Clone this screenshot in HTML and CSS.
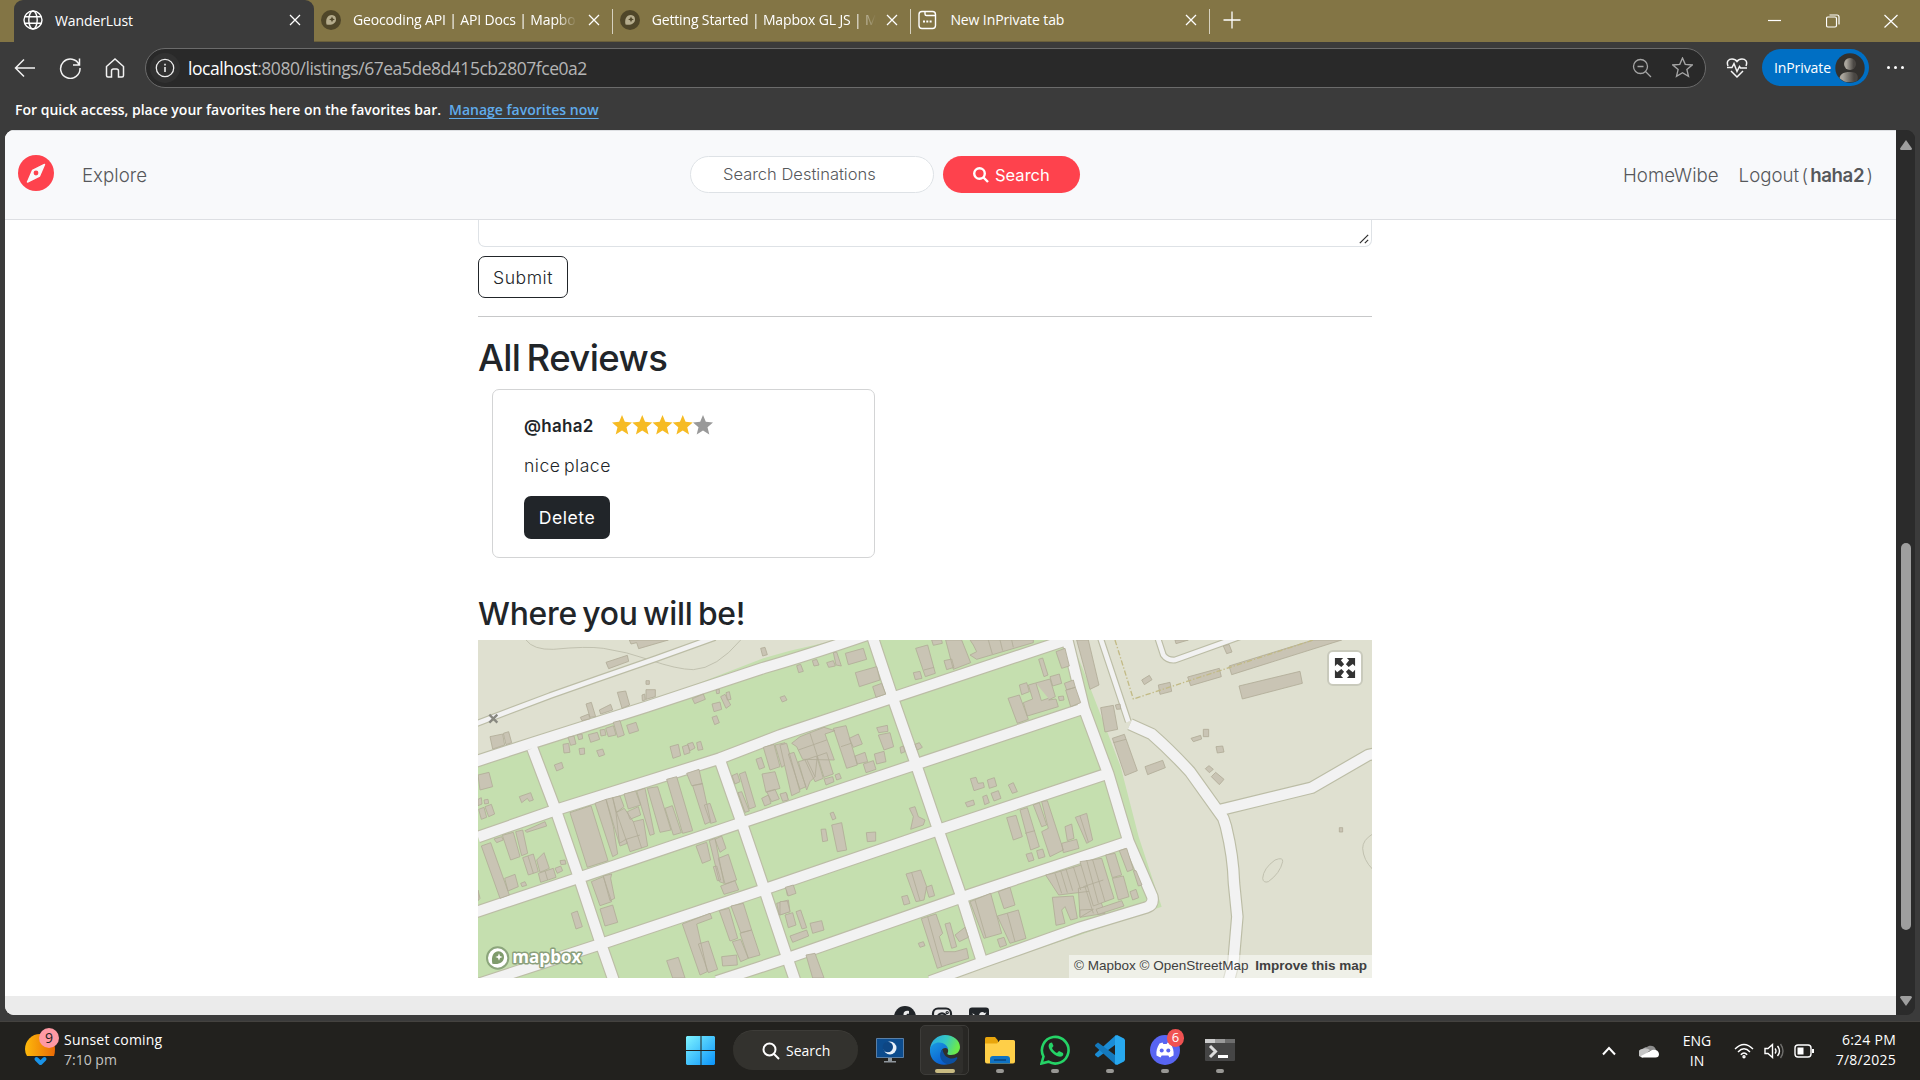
FILE: index.html
```html
<!DOCTYPE html>
<html lang="en">
<head>
<meta charset="utf-8">
<title>WanderLust</title>
<link rel="stylesheet" href="styles.css">
</head>
<body>
<div class="tabs">
  <div class="tab active">
    <svg class="fav" viewBox="0 0 20 20" fill="none" stroke="#fff" stroke-width="1.4"><circle cx="10" cy="10" r="9"/><ellipse cx="10" cy="10" rx="4.2" ry="9"/><path d="M1.8 6.8h16.4M1.8 13.2h16.4"/></svg>
    <span class="title">WanderLust</span>
    <svg class="x" viewBox="0 0 12 12"><path d="M1 1l10 10M11 1L1 11"/></svg>
  </div>
  <div class="tab">
    <svg class="fav" viewBox="0 0 20 20"><circle cx="10" cy="10" r="10" fill="#4f4629"/><path d="M5.5 14.5c-1-5 .5-9.500 5.500-9.500a4.400 4.400 0 0 1 4 4.500c0 4-4 6-9.500 5z" fill="#b5ac8d"/><path d="M11 6.500l.9 2 2 .9-2 .9-.9 2-.9-2-2-.9 2-.9z" fill="#4f4629"/></svg>
    <span class="title fade">Geocoding API | API Docs | Mapbo</span>
    <svg class="x" viewBox="0 0 12 12"><path d="M1 1l10 10M11 1L1 11"/></svg>
  </div>
  <div class="tab">
    <svg class="fav" viewBox="0 0 20 20"><circle cx="10" cy="10" r="10" fill="#4f4629"/><path d="M5.5 14.5c-1-5 .5-9.500 5.500-9.500a4.400 4.400 0 0 1 4 4.500c0 4-4 6-9.500 5z" fill="#b5ac8d"/><path d="M11 6.500l.9 2 2 .9-2 .9-.9 2-.9-2-2-.9 2-.9z" fill="#4f4629"/></svg>
    <span class="title fade">Getting Started | Mapbox GL JS | M</span>
    <svg class="x" viewBox="0 0 12 12"><path d="M1 1l10 10M11 1L1 11"/></svg>
  </div>
  <div class="tab">
    <svg class="fav" viewBox="0 0 20 20" fill="none" stroke="#fff" stroke-width="1.400"><rect x="1" y="1.500" width="16.500" height="17" rx="3"/><path d="M7 1.500v2.500a1.500 1.500 0 0 0 1.500 1.500h9"/><path d="M5 11.500h2M8.300 11.500h2M11.600 11.500h2" stroke-width="2"/></svg>
    <span class="title">New InPrivate tab</span>
    <svg class="x" viewBox="0 0 12 12"><path d="M1 1l10 10M11 1L1 11"/></svg>
  </div>
  <svg class="plus" viewBox="0 0 18 18"><path d="M9 .5v17M.5 9h17"/></svg>
  <div class="winbtns">
    <svg viewBox="0 0 14 14"><path d="M0 6.500h13"/></svg>
    <svg viewBox="0 0 14 14"><rect x=".5" y="3" width="10" height="10" rx="1.500"/><path d="M3.500 1h7.500a2 2 0 0 1 2 2v7.500"/></svg>
    <svg viewBox="0 0 14 14"><path d="M.5 1l13 12.500M13.500 1L.5 13.500"/></svg>
  </div>
</div>
<div class="toolbar">
  <svg class="tool" viewBox="0 0 22 22"><path d="M21 11H1.500M10 2.500L1.500 11l8.500 8.500"/></svg>
  <svg class="tool" viewBox="0 0 22 22"><path d="M20.300 8A9.700 9.700 0 1 0 21 11M20.500 1.500V8h-6.500"/></svg>
  <svg class="tool" viewBox="0 0 22 22"><path d="M2.500 9.500L11 2l8.500 7.500v9a1.500 1.500 0 0 1-1.500 1.500h-3.500v-6a2 2 0 0 0-2-2h-3a2 2 0 0 0-2 2v6H4a1.500 1.500 0 0 1-1.500-1.500z"/></svg>
  <div class="url">
    <span class="infobg"><svg viewBox="0 0 20 20" fill="none" stroke="#eee" stroke-width="1.300"><circle cx="10" cy="10" r="8.700"/><path d="M10 9v5M10 5.800v1.700" stroke-width="1.600"/></svg></span>
    <span class="addr"><b>localhost</b>:8080/listings/67ea5de8d415cb2807fce0a2</span>
    <svg class="uico" viewBox="0 0 20 20"><circle cx="8.500" cy="8.500" r="7"/><path d="M13.500 13.500l5.500 5.500M5.500 8.500h6"/></svg>
    <svg class="uico star" viewBox="0 0 20 20"><path d="M10 1l2.600 6 6.600.6-5 4.400 1.500 6.500L10 15l-5.700 3.500L5.800 12l-5-4.400L7.400 7z"/></svg>
  </div>
  <svg class="heart" viewBox="0 0 22 22"><path d="M2 9C0 4 3 2 6 2c2.500 0 4 1 5 2.500C12 3 13.500 2 16 2c3 0 6 2 4 7M1 10.500h5l2-4 3 8 2.500-5 1 1.500H21M5 14l6 6 6-6"/></svg>
  <div class="priv"><span>InPrivate</span>
    <svg viewBox="0 0 30 30"><defs><linearGradient id="av"><stop offset=".2" stop-color="#aaa59c"/><stop offset=".8" stop-color="#4a4743"/></linearGradient><clipPath id="ac"><circle cx="15" cy="15" r="14.500"/></clipPath></defs><circle cx="15" cy="15" r="14.700" fill="#33312e"/><g fill="url(#av)" clip-path="url(#ac)"><circle cx="15" cy="11" r="6"/><path d="M4 29c0-8 4-10 11-10s9 3 7 10z"/></g></svg></div>
  <span class="dots"><i></i><i></i><i></i></span>
</div>
<div class="favbar"><span>For quick access, place your favorites here on the favorites bar.</span><a>Manage favorites now</a></div>
<div class="view">
  <div class="page">
    <nav>
      <svg class="compass" viewBox="0 0 36 36"><circle cx="18" cy="18" r="18" fill="#fe424d"/><path d="M26.500 9.500L21.500 21l-12 6 5-11.500z" fill="#f8f9fa" stroke="#f8f9fa" stroke-width="1.500" stroke-linejoin="round"/><circle cx="18" cy="18" r="2.400" fill="#fe424d"/></svg>
      <a class="explore">Explore</a>
      <div class="field">Search Destinations</div>
      <div class="sbtn"><svg viewBox="0 0 16 16"><circle cx="6.500" cy="6.500" r="5.300"/><path d="M10.500 10.500l4.500 4.500"/></svg><span>Search</span></div>
      <a class="home">HomeWibe</a>
      <a class="logout">Logout ( <b>haha2</b> )</a>
    </nav>
    <main>
      <div class="area"><svg viewBox="0 0 12 12"><path d="M1 11L11 1M7 11l4-4"/></svg></div>
      <button class="submit">Submit</button>
      <hr>
      <h2>All Reviews</h2>
      <div class="card">
        <div class="who"><b>@haha2</b>
          <svg class="stars" viewBox="0 0 101 20"><defs><path id="s" d="M10 0l2.800 6.800 7.200.6-5.500 4.800 1.800 7.300L10 15.500l-6.300 4 1.800-7.300L0 7.400l7.200-.6z"/></defs><g fill="#f6bb23"><use href="#s"/><use href="#s" x="20.250"/><use href="#s" x="40.500"/><use href="#s" x="60.750"/></g><use href="#s" x="81" fill="#999"/></svg>
        </div>
        <p>nice place</p>
        <button class="delete">Delete</button>
      </div>
      <h3>Where you will be!</h3>
      <div class="map">
        <svg viewBox="24 30 2682 1014">
          <path class="green" d="M0 405L190 335 530 220 880 85 960 62 1100 30H1802L1840 120 1952 410 2006 620 2075 830 1830 915 1440 1044H0z"/>
          <g class="contour"><path d="M168 30Q190 60 250 58 350 48 400 55 470 65 540 90 620 118 670 119 740 115 812 30"/><path d="M2378 745Q2380 715 2415 690 2440 680 2438 695 2430 730 2395 755 2380 760 2378 745zM2708 612Q2678 630 2678 655 2680 690 2708 718"/></g>
          <g class="case"><path id="r" d="M0 400L190 338 530 230 880 114Q1000 80 1190 15M24 621L257 540 748 386 930 316 1268 203 1795 28M0 852L327 743 815 578 930 539 1338 403 1842 235M0 1070L393 942 883 778 1405 600 1915 430M740 1054L960 982 1475 802 1980 633M1380 1054L1535 998 1830 893 2030 832Q2052 825 2047 800L1975 633 1915 432 1842 235 1787 10M187 355L257 540 327 743 393 942 432 1054M748 386L815 578 883 778 950 978 976 1054M1204 10L1268 203 1338 403 1405 600 1475 802 1537 998M1980 283L2045 312Q2100 360 2160 425L2260 565 2268 590Q2290 680 2292 760L2302 860 2290 1000 2276 1054M2250 540L2525 473 2695 375 2720 370"/><path class="thin" d="M0 288L240 197 385 146 560 85 735 22M1890 20L1975 275M2062 20L2080 75Q2092 92 2115 90L2310 20"/></g>
          <g class="road"><use href="#r"/><path class="thin" d="M0 288L240 197 385 146 560 85 735 22M1890 20L1975 275M2062 20L2080 75Q2092 92 2115 90L2310 20"/></g>
          <path class="b" d="M478 30L483 42 500 38 506 56 595 30zM408 97L472 76 476 94 416 116zM442 187L467 183 479 225 456 235zM348 222L364 217 377 260 360 262zM331 262L356 252 360 266 336 272zM388 240L422 223 428 240 392 252zM528 179H556V200L528 208zM516 195L524 192 526 210 517 212zM528 152H538V163H528zM872 55L885 52 892 74 878 78zM60 320L98 312 104 345 68 357zM100 310L116 305 125 338 108 344zM24 435L57 427 68 470 30 480zM667 206L700 192 706 208 674 221zM726 222L750 216 755 238 732 245zM752 200L765 193 782 225 768 235zM768 188L778 185 783 208 772 210zM738 180L748 178V190L740 191zM726 262L740 257 748 278 734 284zM930 202L944 197 951 210 937 216zM355 314L382 307 389 328 362 337zM390 300L404 298 408 315 393 318zM407 295L430 287 438 315 415 320zM430 277L450 272 463 315 443 322zM470 286L498 277 506 302 478 311zM279 343L296 340 300 367 282 369zM294 322L312 318 318 342 302 346zM322 314L336 312 338 326 326 329zM327 356L343 354 344 372 330 374zM380 362L398 357 404 374 387 380zM253 405L275 397 280 414 260 423zM600 350L625 343 632 377 609 385zM637 350L654 344 660 368 643 374zM652 342L668 337 675 354 660 362zM680 338L692 334 699 358 684 361zM148 500L182 488 190 510 178 514 172 505 155 518zM24 508L34 503 36 522 24 527zM42 510L54 508 56 520 44 522zM26 538L42 532 50 562 34 568zM45 530L64 523 74 552 56 560z"/>
          <path class="b" d="M300 548L363 527 414 692 352 712zM375 520L408 508 430 590 443 672 428 680zM408 508L428 503 440 548 472 640 450 648zM428 503L450 498 462 530 438 548zM462 492L497 483 512 525 475 537zM500 483L525 475 553 612 540 616zM438 548L463 535 490 575 520 568 533 648 480 665 468 628 448 640zM472 545L505 530 512 555 480 568zM468 628L510 615M490 575L515 655M532 475L563 470 603 600 570 607zM585 535L607 527 634 608 610 615zM590 448L620 440 668 602 638 610zM650 430L687 418 697 462 665 467zM668 467L697 460 722 575 705 583zM703 525L720 520 739 575 722 580zM880 352L912 343 930 410 900 420zM915 345L945 338 960 395 935 412zM858 388L874 382 884 412 868 418zM786 437L802 430 810 455 795 462zM808 432L826 425 857 530 838 537zM804 488L815 485 838 543 825 547zM876 432L915 425 930 475 888 487zM875 505L895 495 903 520 884 528zM890 485L915 478 928 507 905 515zM940 492L950 490 954 508 943 512z"/>
          <path class="b" d="M24 780L30 805 24 812zM34 648L62 638 118 795 90 805zM72 627L95 620 100 630 80 638zM97 616L130 607 150 680 122 690zM137 605L158 600 173 670 155 677zM165 602L225 575 230 588 170 607zM158 683L190 672 205 725 175 735zM174 678L190 730M200 690L222 668 238 715 210 727zM205 730L250 715 258 742 212 757zM225 722L233 750M270 692L285 690 288 702 273 704zM255 715L272 708 278 722 262 730zM104 745L135 733 145 770 114 783zM152 760L165 755 170 766 156 770zM364 755L400 740 425 815 390 827zM400 738L425 732 422 745 434 805 420 812zM390 837L428 825 443 877 405 888zM304 850L322 843 337 890 318 897zM678 648L710 637 722 690 697 700zM718 632L735 625 762 760 748 755zM735 628L755 618 768 655 750 667zM745 685L775 673 800 750 765 762zM752 768L795 752 806 780 762 793zM730 710L740 708 752 750 742 752zM637 882L720 850 726 865 680 882 712 1025 690 1035zM685 942L715 933 743 1018 715 1028zM748 842L777 835 803 925 780 933zM783 828L820 820 845 900 812 908zM810 910L845 900 870 975 835 985zM787 935L812 928 835 985 812 995zM755 980L800 975 802 1005 758 1008zM590 992L625 982 645 1044H608zM948 775L962 772 968 792 952 796zM920 820L955 810 960 845 928 855z"/>
          <g transform="translate(930)"><path class="b" d="M196 70L250 55 260 88 205 104zM226 128L290 110 300 150 238 170zM278 170L305 160 317 192 288 202zM160 68L170 66 184 108 168 105zM140 98L160 92 166 108 146 112zM97 92L110 88 117 105 102 108zM50 107L62 103 70 124 56 128zM407 55L443 45 466 130 436 140zM432 120L462 112M400 128L420 124 426 145 406 149zM455 30H485L487 40 460 46zM497 30H545L572 98 520 118zM492 92L515 87 522 112 500 119zM570 75L590 65 580 45 570 30H760V38L590 88zM625 30L637 72M660 30L668 62M695 30L700 52M776 88L788 84 804 135 792 140zM828 65L855 55 868 108 845 115zM810 140L838 132 845 160 818 168zM853 160L880 150 886 172 860 180zM857 180L886 172 902 218 872 230zM835 200L850 198 852 210 838 212zM718 165L740 158 748 185 725 194zM730 218L758 207 745 165 810 147 826 200 806 210 828 207 835 230 742 258zM768 160L784 212 805 205M684 205L718 195 745 268 712 280zM890 30H925L957 165 930 178z"/>
          <path class="b" d="M160 295L198 287 232 405 200 415zM183 350L213 340M208 325L235 312 247 342 220 352zM225 378L255 367 263 395 232 402zM250 402L280 392 288 418 258 428zM283 372L312 364 318 395 290 402zM295 315L330 308 341 350 312 360zM290 293L322 286 324 304 296 308zM360 352L370 348 375 365 363 370zM405 343L418 338 427 352 412 360zM35 340L60 320 132 292 165 302 135 312 163 390 68 388 50 350zM90 310L112 378 105 440M55 360L140 330M0 345L20 340 60 485 35 497zM25 372L42 367 78 470 60 478zM55 395L80 388 105 440 90 455 80 480zM75 390L110 378 130 445 105 455zM112 378L140 368 160 432 132 442zM132 447L158 440 162 455 138 465zM165 435L178 430 184 445 170 450zM0 492L18 487 25 510 8 514zM150 550L160 546 168 565 158 570zM123 598L137 597 143 632 128 635zM155 585L185 578 200 660 172 665zM259 608L287 606V633L262 635zM388 535L405 530 415 560 435 570 430 585 392 598 400 560zM556 518L580 510 584 524 562 531zM571 446L588 442 594 460 610 458 613 472 582 482zM622 450L643 443 650 468 628 475zM608 500L620 495 628 518 614 524zM633 490L655 482 663 505 642 513zM685 465L700 458 712 485 697 490z"/>
          <path class="b" d="M378 732L422 720 440 770 432 810 408 815zM395 728L420 812M438 772L455 765 464 797 447 802zM365 800L382 796 390 820 372 825zM16 772L40 765 48 790 25 798zM0 815L22 813 30 845 0 855zM15 855L38 848 48 885 25 893zM48 845L62 840 80 893 66 897zM90 880L125 872 132 900 98 910zM30 918L80 900 86 918 38 937zM78 975L105 970 132 1044H98zM424 866L468 852 488 910 478 920 492 965 525 965 560 955 566 985 500 1005 472 1015zM443 860L485 1010M495 882L510 878 530 950 515 955zM525 915L555 892 565 922 538 935zM415 940L430 935 435 947 420 952zM570 815L632 790 665 910 612 925zM585 810L618 923M655 785L690 772 705 825 672 836zM652 858L715 840 738 925 690 940zM682 850L705 935M652 928L672 922 680 945 660 952zM680 563L708 556 727 620 700 630zM720 540L742 533 778 650 752 660zM735 610L765 602M760 525L778 518 800 585 785 590zM785 515L802 512 850 660 810 680 785 605 805 595zM855 590L875 582 882 625 862 632zM845 640L890 628 897 655 850 668zM886 562L920 550 938 630 920 640zM900 558L925 636M738 673L755 668 762 690 746 695zM770 662L788 657 795 680 776 686zM797 735L820 730 960 688V780L836 795zM825 730L845 790M842 722L862 788M858 717L878 782M880 710L902 780M905 705L930 770M930 700L950 770M817 802L880 798 892 865 872 870 855 830 845 840 855 880 828 886zM895 775L945 765 975 850 900 862zM915 770L940 850"/></g>
          <g transform="translate(1830)"><path class="b" d="M62 233L100 226 113 298 75 306zM106 225L120 222 122 237 110 238zM97 325L133 313 172 422 135 437zM100 338L138 328M195 410L248 391 256 413 203 434zM333 325L362 316 365 327 340 335zM370 298H386V320H370zM408 350L428 348 432 366 412 369zM376 416L387 407 400 418 388 428zM394 440L407 427 432 448 418 464zM185 150L208 136 216 149 193 164zM235 165L270 157 275 184 240 193zM323 141L418 115 424 140 332 167zM430 48L447 43 456 66 440 71zM447 108L700 30H785L455 134zM477 168L660 124 667 160 487 207zM285 30H325L288 41zM778 593H788V606H778zM0 695L65 685 102 805 40 828zM20 690L55 820M38 690L75 815M10 770L70 750M77 675L105 670 125 735 97 743zM118 662L140 655 160 718 142 725zM97 745L130 738 147 800 115 810zM150 785L168 778 176 803 158 810zM48 838L125 812 132 828 55 853zM0 840L40 838 0 862zM160 722L168 722 186 765 175 768z"/><path class="bound" d="M105 30L160 207 700 30"/></g>
          <path d="M58 254L82 278M82 254L58 278" stroke="#888880" stroke-width="7"/>
          <circle cx="83" cy="984" r="32" fill="#fff" stroke="#8ca57c" stroke-width="6"/><path d="M67 1001c-4-22 3-37 19-37a17 17 0 0 1 16 17c0 16-16 24-35 20z" fill="#7f9b6c"/><path d="M87 970l3 8 8 3-8 3-3 8-3-8-8-3 8-3z" fill="#fff"/>
          <text x="127" y="999" class="mb" textLength="207" lengthAdjust="spacingAndGlyphs">mapbox</text>
        </svg>
        <span class="full"><svg viewBox="0 0 24 24"><path d="M1 1h9L7.500 3.500 11 8l-3 3-4.500-3.500L1 10zM23 1v9l-2.500-2.500L16 11l-3-3 3.500-4.500L14 1zM1 23v-9l2.500 2.500L8 13l3 3-3.500 4.500L10 23zM23 23h-9l2.500-2.500L13 16l3-3 4.500 3.500L23 14z" fill="#333"/></svg></span>
        <span class="attr"><span>© Mapbox © OpenStreetMap</span><b>Improve this map</b></span>
      </div>
    </main>
    <footer>
      <svg viewBox="0 0 22 22"><circle cx="11" cy="11" r="11" fill="#212529"/><path d="M9.500 22v-8H7v-3h2.500V8.500c0-3 2-4.200 5.500-3.500v2.700c-2-.2-2.500.3-2.500 1.500V11h2.700l-.5 3h-2.200v8z" fill="#ebebeb"/></svg>
      <svg viewBox="0 0 22 22" fill="none" stroke="#212529" stroke-width="2.200"><rect x="2" y="2.500" width="18" height="18" rx="5"/><circle cx="11" cy="11.500" r="4.200"/><circle cx="16.200" cy="6.600" r=".6"/></svg>
      <svg viewBox="0 0 22 22"><rect x="1" y="1.500" width="20" height="20" rx="3" fill="#212529"/><path d="M4.500 7c2 2 4 3 6.500 3 0-4 3.500-5 5.500-3l2-.6-1.300 2C17 15 12 18 5 16.500c2 0 3-.5 4-1.500-2-.3-2.500-1-3-2z" fill="#ebebeb"/></svg>
    </footer>
  </div>
  <div class="scroll"><svg viewBox="0 0 12 10"><path d="M6 0l6 8.500q0 1.500-1.500 1.500h-9Q0 10 0 8.500z"/></svg><span class="thumb"></span><svg viewBox="0 0 12 10"><path d="M6 10L0 1.500Q0 0 1.500 0h9Q12 0 12 1.500z"/></svg></div>
</div>
<div class="task">
  <div class="weather">
    <svg viewBox="0 0 36 40"><defs><linearGradient id="su"><stop offset="0" stop-color="#fdb90c"/><stop offset="1" stop-color="#ea6a05"/></linearGradient></defs><path d="M2 28Q0 25 0 21a15 15 0 0 1 30 0q0 4-1 7z" fill="url(#su)"/><path d="M11.500 31l4 4 4-4" fill="none" stroke="#1a93e8" stroke-width="4" stroke-linecap="round" stroke-linejoin="round"/><circle cx="24" cy="10" r="10" fill="#ff99a4"/><text x="24" y="15" text-anchor="middle" font-size="14" fill="#222">9</text></svg>
    <div class="wt"><span>Sunset coming</span><br><span class="dim">7:10 pm</span></div>
  </div>
  <svg class="win" viewBox="0 0 29 29"><defs><linearGradient id="w" x2="1" y2="1"><stop offset="0" stop-color="#7ff4ff"/><stop offset="1" stop-color="#0a93fa"/></linearGradient></defs><path d="M1 0h13.500v14H0V1zM15.500 0H28l1 1v13H15.500zM0 15h14.500v14H1l-1-1zM15.500 15H29v13l-1 1H15.500z" fill="url(#w)"/></svg>
  <div class="tsearch"><svg viewBox="0 0 18 18"><circle cx="7.500" cy="7.500" r="6"/><path d="M12 12l5 5"/></svg><span>Search</span></div>
  <div class="app"><svg viewBox="0 0 30 30"><path d="M1.500 3.500h27v19h-27z" fill="#0c4c8e" stroke="#5a7fa6"/><circle cx="15" cy="13" r="6.500" fill="#e8f1fa"/><circle cx="12.800" cy="12" r="5.200" fill="#0d4684"/><path d="M13 23h4v3h4v1.500H9V26h4z" fill="#8f969c"/></svg></div>
  <div class="app on"><svg viewBox="0 0 30 30"><defs><linearGradient id="e1" x2="1" y2=".3"><stop offset="0" stop-color="#27a6e6"/><stop offset=".55" stop-color="#35c8c4"/><stop offset="1" stop-color="#6bea4c"/></linearGradient><linearGradient id="e2" y2="1" x2=".6"><stop offset="0" stop-color="#1b9be2"/><stop offset="1" stop-color="#0a5fd0"/></linearGradient></defs><path d="M0 14C1 5 8 0 15 0c9 0 15 6 15 12 0 5-4 8-9 8-4 0-4-1-3-3 1-3-2-7-7-7-6 0-10 3-11 7z" fill="url(#e1)"/><path d="M0 14c1-4 5-6.500 9-6.500 5 0 8.500 3 9 6.500-5-3-8 2-7 7 1 4 5 8 8 8C8 32-1 25 0 14z" fill="url(#e2)"/><path d="M12.500 14.500c-5 5-1.500 14.500 6.500 14.700 5-.7 7-3.200 8.500-6.200-.3-.8-1-.8-1.500-.4-5 2.400-12 .4-13.500-8.100z" fill="#0c4fa0"/></svg><i></i></div>
  <div class="app"><svg viewBox="0 0 30 30"><path d="M0 3.500Q0 2 1.500 2H10l3 3.500V9H0z" fill="#e8a50c"/><path d="M0 8.500h12l3-3.500h13.500Q30 5 30 6.500v20q0 2-2 2H2q-2 0-2-2z" fill="#ffcf48"/><path d="M5 28.500V24q0-3 3-3h14q3 0 3 3v4.500z" fill="#0f73c4"/><path d="M9 25h12" stroke="#08437c" stroke-width="1.500"/></svg><i></i></div>
  <div class="app"><svg viewBox="0 0 30 30"><path d="M1.500 28.500l2-7A13.300 13.300 0 1 1 8.500 26.700z" fill="#22211e" stroke="#25d366" stroke-width="2.600"/><path d="M10 8c-5 4 5 15 11.500 13.500 2-1 2-2 1.500-3.500l-4-2-2 2c-2-1-4-2.500-5-5L13.500 11 12 7.500z" fill="#25d366"/></svg><i></i></div>
  <div class="app"><svg viewBox="0 0 30 30"><path d="M21 0L22 8.500 3 22.500 .5 20.500q-1-1 0-2z" fill="#1b8dd6"/><path d="M21 30L22 21.500 3 7.500 .5 9.500q-1 1 0 2z" fill="#1479bd"/><path d="M22 0l7 3.500 1 1.500v20l-1 1.500L22 30l-2-1V1z" fill="#28a8ee"/></svg><i></i></div>
  <div class="app"><svg viewBox="0 0 30 30"><circle cx="15" cy="15" r="15" fill="#5865f2"/><path d="M9.500 8.500l3-1 .8 1.500h3.400l.8-1.500 3 1c2.500 4 3.500 7.500 3 12l-4 2-1.200-2h-6.600l-1.200 2-4-2c-.5-4.500.5-8 3-12z" fill="#fff"/><circle cx="11.700" cy="15.500" r="2" fill="#5865f2"/><circle cx="18.300" cy="15.500" r="2" fill="#5865f2"/></svg><span class="badge">6</span><i></i></div>
  <div class="app"><svg viewBox="0 0 30 30"><rect y="4" width="30" height="22" rx="1" fill="#454545"/><path d="M0 4h10v4H0z" fill="#ccc"/><path d="M10 4h10v4H10z" fill="#999"/><path d="M20 4h10v4H20z" fill="#6d6d6d"/><path d="M5 11l5.500 5.500L5 22" fill="none" stroke="#ddd" stroke-width="3"/><path d="M13 21.500h10" stroke="#fff" stroke-width="3"/></svg><i></i></div>
  <div class="tray">
    <svg class="chev" viewBox="0 0 14 10"><path d="M1 8.500l6-6.500 6 6.500"/></svg>
    <svg class="cloud" viewBox="0 0 20 14"><path d="M3 8a5 5 0 0 1 5-5 5.500 5.500 0 0 1 9 3z" fill="#8d8d8d"/><path d="M4 13.500A4 4 0 0 1 3 5q4-2 8 1z" fill="#c5c5c5"/><path d="M3 13.500q-1-1-1-1.500L13 6q6-1 7 4 0 3.500-3.500 3.500z" fill="#fff"/></svg>
    <div class="lang">ENG<br>IN</div>
    <svg class="sys wifi" viewBox="0 0 20 16"><path d="M1 6q9-9 18 0M4 9q6-6.500 12 0M6.800 11.800q3.200-3.500 6.400 0"/><circle cx="10" cy="13.800" r="1"/></svg>
    <svg class="sys spk" viewBox="0 0 20 16"><path d="M1 5.500h3L8.500 1.500v13L4 10.500H1zM11 5.500q2 2.500 0 5M13.500 3q4 5 0 10"/><path d="M16.500 1q5 7 0 14" opacity=".35"/></svg>
    <svg class="sys bat" viewBox="0 0 20 14"><rect x="1" y="1" width="16" height="12" rx="3"/><path d="M19 5v4" stroke-width="2"/><rect x="3.500" y="3.500" width="6" height="7" fill="#fff" stroke="none"/></svg>
    <div class="clock">6:24 PM<br>7/8/2025</div>
  </div>
</div>
</body>
</html>
```
FILE: styles.css
```css
*{box-sizing:border-box}
body{margin:0;width:1920px;height:1080px;overflow:hidden;background:#3b3b3b;color:#fff;font-family:"Open Sans","Noto Sans",sans-serif;font-size:14px;display:flex;flex-direction:column}
svg{display:block;flex:none}
.tabs{height:42px;flex:none;background:#837545;display:flex;padding-left:14px}
.tab{width:298.700px;height:42px;display:flex;align-items:center;padding:0 13px 2px 7px}
.tab:not(.active){position:relative;border-bottom:1px solid #6a5f3b}
.tab:not(.active)::after{content:"";position:absolute;right:0;top:9px;width:1px;height:25px;background:#d6d1bf}
.tab.active{width:300px;background:#3b3b3b;border-radius:9px 9px 0 0;padding-left:9px}
.fav{width:20px;height:20px}
.title{margin-left:12px;width:226px;flex:none;white-space:nowrap;font-size:14px;letter-spacing:-.1px}
.fade{letter-spacing:-.15px;-webkit-mask-image:linear-gradient(90deg,#000 90%,transparent 99%)}
.x{width:12px;height:12px;margin-left:auto;stroke:#fff;stroke-width:1.300}
.plus{width:18px;height:18px;margin:11px 0 0 13px;stroke:#fff;stroke-width:1.300}
.winbtns{margin-left:auto;display:flex;gap:44px;padding:14px 22px 0 0}
.winbtns svg{width:14px;height:14px;fill:none;stroke:#fff;stroke-width:1.200}
.toolbar{height:51px;flex:none;display:flex;align-items:center;padding-left:14px}
.tool{width:22px;height:22px;margin-right:23px;fill:none;stroke:#f2f2f2;stroke-width:1.500}
.url{width:1561px;height:40px;margin-left:-4px;border:1px solid #6b6b6b;border-radius:20px;background:#292929;display:flex;align-items:center;padding:0 12px 0 4px}
.infobg{width:30px;height:30px;border-radius:50%;background:#313131;padding:5px}
.infobg svg{width:20px;height:20px}
.addr{margin-left:8px;font-size:17.500px;letter-spacing:-.46px;color:#b5b5b5;margin-right:auto}
.addr b{font-weight:400;color:#fff}
.uico{width:20px;height:20px;fill:none;stroke:#a5a5a5;stroke-width:1.300;margin-right:20px}
.star{margin-right:0;width:21px;height:21px}
.heart{width:22px;height:22px;margin-left:20px;fill:none;stroke:#f5f5f5;stroke-width:1.500}
.priv{margin-left:14px;width:107px;height:37px;border-radius:19px;background:#006fc4;display:flex;align-items:center;padding:0 4px 0 12px;justify-content:space-between}
.priv svg{width:30px;height:30px}
.priv span{font-size:14px;letter-spacing:-.1px}
.dots{display:flex;gap:4px;margin-left:18px}
.dots i{width:3px;height:3px;border-radius:50%;background:#fff}
.favbar{height:37px;flex:none;padding:7px 0 0 15px;font-weight:600;font-size:14px;line-height:20px;white-space:nowrap}
.favbar a{color:#60acec;margin-left:8px;text-decoration:underline;text-underline-offset:3px}
.view{height:885px;flex:none;margin:0 5px;border-radius:9px;overflow:hidden;display:flex;background:#2a2a2a}
.page{width:1891px;background:#fff;color:#212529;font-family:Inter,"Open Sans",sans-serif;display:flex;flex-direction:column;overflow:hidden}
nav{height:90px;flex:none;background:#f8f9fb;border-top:1px solid #dee0e3;border-bottom:1px solid #dddfe3;display:flex;padding-left:13px;color:#56585b;font-size:18.700px;font-weight:300;white-space:nowrap}
.compass{width:36px;height:36px;margin-top:24px}
.explore{margin:32px 0 0 28px;width:608px;line-height:26px}
.field{width:244px;height:37px;margin-top:25px;border:1px solid #dee2e6;border-radius:19px;background:#fff;padding-left:32px;font-size:16.500px;line-height:34px}
.sbtn{width:137px;height:37px;margin:25px 0 0 9px;border-radius:19px;background:#fe424d;color:#fff;display:flex;align-items:center;padding-left:30px;gap:6px;font-size:16.500px;font-weight:400}
.sbtn svg{width:16px;height:16px;fill:none;stroke:#fff;stroke-width:2.400}
.home{margin:32px 0 0 543px;line-height:26px}
.logout{margin:32px 0 0 20px;line-height:26px;word-spacing:-3px}
.logout b{font-weight:600;letter-spacing:-.4px}
main{width:894px;margin-left:473px;flex:none}
.area{height:27px;border:1px solid #dee2e6;border-top:0;border-radius:0 0 7px 7px;display:flex;justify-content:flex-end;align-items:flex-end;padding:2px}
.area svg{width:10px;height:10px;stroke:#333;stroke-width:1.500}
button{display:block;font:inherit;height:42px;border-radius:7px;padding:0;font-size:17.600px;letter-spacing:.5px}
.submit{margin-top:9px;width:90px;border:1px solid #212529;background:#fff;color:#212529;font-weight:300}
hr{border:0;height:1px;background:#c7c8c9;margin:18px 0 0}
h2{font-weight:500;font-size:36.500px;line-height:42px;margin:20px 0 10px;white-space:nowrap;letter-spacing:-.6px;word-spacing:-3px}
.card{width:383px;height:169px;margin-left:14px;border:1px solid #d3d4d5;border-radius:7px;padding:23px 31px}
.who{display:flex;align-items:center;height:26px;font-size:17px}
.who b{font-weight:600;width:88px;letter-spacing:.3px}
.stars{width:101px;height:20px;margin-top:-3px}
p{margin:14px 0 0;font-size:17.600px;font-weight:300;line-height:26px;letter-spacing:.5px;word-spacing:-2px}
.delete{margin-top:17px;width:86px;height:43px;border:0;background:#212529;color:#fff;font-weight:400}
h3{font-weight:500;font-size:31.800px;line-height:38px;margin:37px 0 0;height:45px;white-space:nowrap;letter-spacing:-.2px;word-spacing:-3px}
.map{height:338px;background:#dfe0d0;position:relative;overflow:hidden}
.map>svg{width:894px;height:338px}
.green{fill:#c5dfaf}
.contour{fill:none;stroke:#bbbba8;stroke-width:2.500}
.case{fill:none;stroke:#bcbda6;stroke-width:38;stroke-linejoin:round}
.road{fill:none;stroke:#f2f2f2;stroke-width:31;stroke-linejoin:round}
.case .thin{stroke-width:21}
.road .thin{stroke-width:14}
.b{fill:#c9c4b4;stroke:#b1ac98;stroke-width:2.500}
.bound{fill:none;stroke:#c2ba85;stroke-width:4;stroke-dasharray:16 6 4 6}
.mb{font:700 52px "Open Sans",sans-serif;fill:#fff;stroke:#8a9f7b;stroke-width:9;paint-order:stroke;stroke-linejoin:round}
.full{position:absolute;right:9px;top:10px;width:36px;height:36px;border-radius:6px;background:#fff;border:2px solid #c9cabc;padding:5px}
.full svg{width:22px;height:22px}
.attr{position:absolute;right:0;bottom:0;width:303px;height:23px;background:rgba(255,255,255,.5);font:13.500px/21px "Liberation Sans",sans-serif;color:#404040;display:flex;justify-content:space-between;padding:0 5px;white-space:nowrap}
footer{margin-top:18px;background:#ebebeb;flex:1 0 60px;display:flex;justify-content:center;gap:15px;padding:10px 17px 0 0}
footer svg{width:22px;height:22px}
.scroll{width:19px;background:#2b2b2b;display:flex;flex-direction:column;align-items:center;padding:10px 0 9px}
.scroll svg{width:12px;height:10px;fill:#9e9e9e}
.thumb{width:10px;height:387px;border-radius:5px;background:#9e9e9e;margin:393px 0 auto}
.task{margin-top:6px;height:59px;flex:none;border-top:1px solid #44423f;background:#22211e;display:flex;font-size:14px}
.weather{display:flex;width:686px;padding:6px 0 0 25px}
.weather svg{width:36px;height:40px}
.wt{margin:2px 0 0 3px;line-height:20px;letter-spacing:.2px}
.dim{color:#c5c4c2;letter-spacing:0}
.win{width:29px;height:29px;margin-top:14px}
.tsearch{width:125px;height:40px;margin:8px 7px 0 18px;border-radius:20px;background:#33322e;border-top:1px solid #3d3c38;display:flex;align-items:center;gap:6px;padding-left:29px;letter-spacing:0}
.tsearch svg{width:18px;height:18px;fill:none;stroke:#fff;stroke-width:2}
.app{width:49px;height:50px;margin:3px 6px 0 0;position:relative;display:flex;justify-content:center;padding-top:10px;flex:none}
.app svg{width:30px;height:30px}
.app.on{background:#302f2c;border:1px solid #3d3c39;border-radius:5px;padding-top:9px;box-shadow:inset -5px 0 0 #282724}
.app i{position:absolute;left:21px;bottom:2px;width:8px;height:4px;border-radius:2px;background:#989794}
.app.on i{left:14px;width:20px;bottom:1px;background:#c9bb82}
.badge{position:absolute;left:27px;top:4px;width:17px;height:18px;border-radius:9px;background:#f05252;font-size:13px;line-height:17px;text-align:center}
.tray{margin-left:auto;display:flex;align-items:center;padding-right:24px;height:57px;line-height:20px}
.chev{width:14px;height:10px;fill:none;stroke:#fff;stroke-width:2}
.cloud{width:20px;height:14px;margin-left:23px}
.lang{width:32px;margin-left:22px;text-align:center}
.sys{width:20px;height:16px;fill:none;stroke:#fff;stroke-width:1.400}
.wifi{margin-left:21px}.spk{margin-left:10px}.bat{margin-left:10px;height:14px}
.clock{width:64px;margin:-2px 0 0 18px;text-align:right;letter-spacing:.25px}
```
